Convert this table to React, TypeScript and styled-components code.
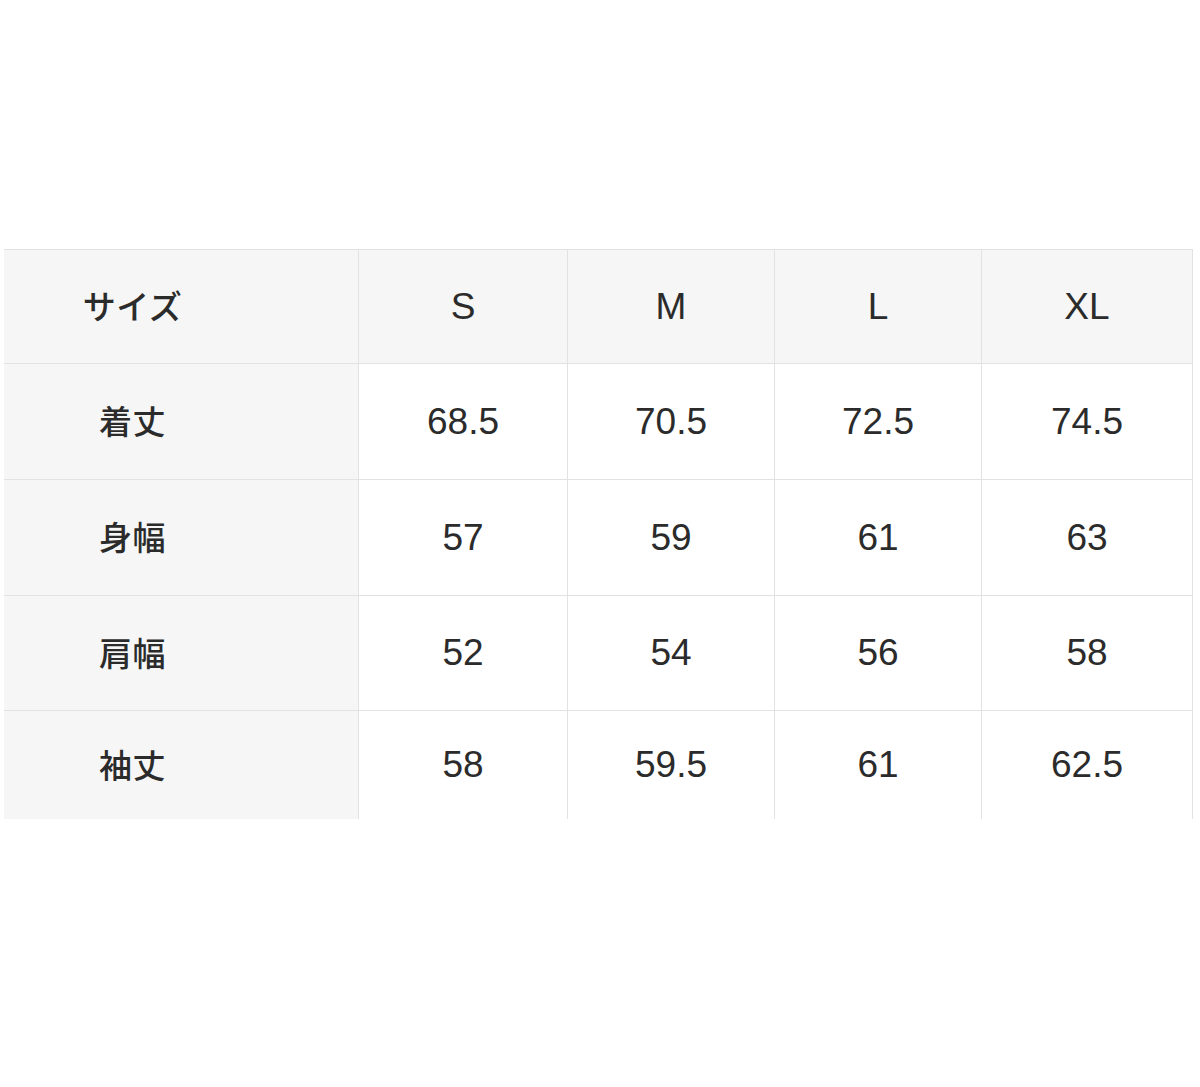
import React from "react";
import styled, { createGlobalStyle } from "styled-components";

const Global = createGlobalStyle`
  html, body { margin: 0; padding: 0; background: #ffffff; }
  body { font-family: "Liberation Sans", "Noto Sans CJK JP", sans-serif; }
`;

const Page = styled.div`
  width: 1200px;
  height: 1087px;
  padding: 249px 0 0 4px;
  box-sizing: border-box;
  background: #fff;
`;

const Table = styled.div`
  display: grid;
  grid-template-columns: 355px 209px 207px 207px 211px;
  grid-template-rows: 114px 116px 116px 115px 108px;
  border-top: 1px solid #e2e2e2;
  width: 1189px;
`;

const Cell = styled.div<{ $shaded?: boolean; $last?: boolean; $label?: boolean }>`
  display: flex;
  align-items: center;
  justify-content: center;
  box-sizing: border-box;
  background: ${(p) => (p.$shaded ? "#f6f6f6" : "#ffffff")};
  border-right: 1px solid #e2e2e2;
  border-bottom: ${(p) => (p.$last ? "none" : "1px solid #e2e2e2")};
  padding-right: ${(p) => (p.$label ? "97px" : "0")};
  padding-bottom: ${(p) => (p.$label ? "3px" : "0")};
  color: #2b2b2b;
  font-family: ${(p) =>
    p.$label
      ? '"Noto Sans CJK JP", "Liberation Sans", sans-serif'
      : '"Liberation Sans", "Noto Sans CJK JP", sans-serif'};
  font-size: ${(p) => (p.$label ? "33px" : "37px")};
  font-weight: ${(p) => (p.$label ? 500 : 400)};
  letter-spacing: ${(p) => (p.$label ? "0.5px" : "0")};
`;

const header = ["サイズ", "S", "M", "L", "XL"];
const rows: string[][] = [
  ["着丈", "68.5", "70.5", "72.5", "74.5"],
  ["身幅", "57", "59", "61", "63"],
  ["肩幅", "52", "54", "56", "58"],
  ["袖丈", "58", "59.5", "61", "62.5"],
];

export default function App() {
  return (
    <Page>
      <Global />
      <Table>
        {header.map((h, i) => (
          <Cell key={"h" + i} $shaded $label={i === 0}>
            {h}
          </Cell>
        ))}
        {rows.map((r, ri) =>
          r.map((v, ci) => (
            <Cell
              key={ri + "-" + ci}
              $shaded={ci === 0}
              $label={ci === 0}
              $last={ri === rows.length - 1}
            >
              {v}
            </Cell>
          ))
        )}
      </Table>
    </Page>
  );
}
